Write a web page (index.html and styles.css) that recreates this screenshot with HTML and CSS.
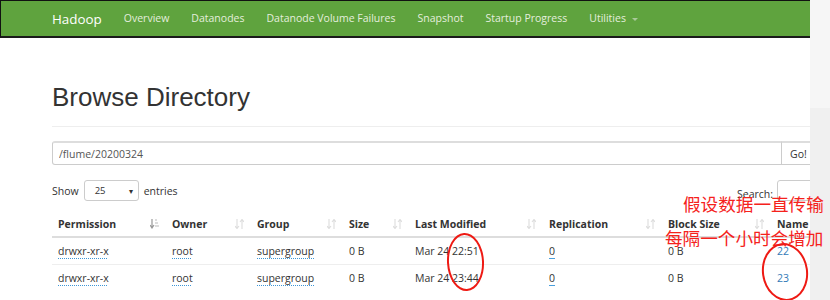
FILE: index.html
```html
<!DOCTYPE html>
<html lang="en">
<head>
    <meta charset="UTF-8">
    <title>Browsing HDFS</title>
    <link rel="stylesheet" href="styles.css">
</head>
<body>
    <div class="window">
        <div class="page">
            <nav class="navbar">
                <span class="brand">Hadoop</span>
                <a class="nav-link" href="#">Overview</a>
                <a class="nav-link" href="#">Datanodes</a>
                <a class="nav-link" href="#">Datanode Volume Failures</a>
                <a class="nav-link" href="#">Snapshot</a>
                <a class="nav-link" href="#">Startup Progress</a>
                <a class="nav-link" href="#">Utilities <span class="caret"></span></a>
            </nav>

            <div class="container">
                <h1 class="page-header">Browse Directory</h1>

                <form class="dir-form">
                    <input type="text" class="dir-input" value="/flume/20200324">
                    <button type="button" class="go-btn">Go!</button>
                </form>

                <div class="table-controls">
                    <label class="length">Show
                        <span class="select">25 <span class="select-caret">&#9662;</span></span>
                        entries</label>
                    <label class="search">Search: <span class="search-input"></span></label>
                </div>

                <table class="listing">
                    <colgroup>
                        <col style="width: 114px">
                        <col style="width: 85px">
                        <col style="width: 92px">
                        <col style="width: 66px">
                        <col style="width: 134px">
                        <col style="width: 119px">
                        <col style="width: 109px">
                        <col style="width: 51px">
                    </colgroup>
                    <thead>
                        <tr>
                            <th><div class="th">Permission <svg class="sort active" width="9" height="10" viewBox="0 0 9 10"><path d="M2 0v8M0 6l2 3 2-3" fill="none" stroke="#999" stroke-width="1.2"/><path d="M5 1h2M5 4h3M5 7h4" stroke="#bbb" stroke-width="1.2"/></svg></div></th>
                            <th><div class="th">Owner <svg class="sort" width="9" height="10" viewBox="0 0 9 10"><path d="M2 0v9M0 7l2 2.5 2-2.5M7 10V1M5 3l2-2.5 2 2.5" fill="none" stroke="#ddd" stroke-width="1.1"/></svg></div></th>
                            <th><div class="th">Group <svg class="sort" width="9" height="10" viewBox="0 0 9 10"><path d="M2 0v9M0 7l2 2.5 2-2.5M7 10V1M5 3l2-2.5 2 2.5" fill="none" stroke="#ddd" stroke-width="1.1"/></svg></div></th>
                            <th><div class="th">Size <svg class="sort" width="9" height="10" viewBox="0 0 9 10"><path d="M2 0v9M0 7l2 2.5 2-2.5M7 10V1M5 3l2-2.5 2 2.5" fill="none" stroke="#ddd" stroke-width="1.1"/></svg></div></th>
                            <th><div class="th">Last Modified <svg class="sort" width="9" height="10" viewBox="0 0 9 10"><path d="M2 0v9M0 7l2 2.5 2-2.5M7 10V1M5 3l2-2.5 2 2.5" fill="none" stroke="#ddd" stroke-width="1.1"/></svg></div></th>
                            <th><div class="th">Replication <svg class="sort" width="9" height="10" viewBox="0 0 9 10"><path d="M2 0v9M0 7l2 2.5 2-2.5M7 10V1M5 3l2-2.5 2 2.5" fill="none" stroke="#ddd" stroke-width="1.1"/></svg></div></th>
                            <th><div class="th">Block Size <svg class="sort" width="9" height="10" viewBox="0 0 9 10"><path d="M2 0v9M0 7l2 2.5 2-2.5M7 10V1M5 3l2-2.5 2 2.5" fill="none" stroke="#ddd" stroke-width="1.1"/></svg></div></th>
                            <th><div class="th">Name</div></th>
                        </tr>
                    </thead>
                    <tbody>
                        <tr>
                            <td><span class="explorer">drwxr-xr-x</span></td>
                            <td><span class="explorer">root</span></td>
                            <td><span class="explorer">supergroup</span></td>
                            <td>0 B</td>
                            <td>Mar 24 22:51</td>
                            <td><span class="repl">0</span></td>
                            <td>0 B</td>
                            <td><a class="name-link" href="#">22</a></td>
                        </tr>
                        <tr>
                            <td><span class="explorer">drwxr-xr-x</span></td>
                            <td><span class="explorer">root</span></td>
                            <td><span class="explorer">supergroup</span></td>
                            <td>0 B</td>
                            <td>Mar 24 23:44</td>
                            <td><span class="repl">0</span></td>
                            <td>0 B</td>
                            <td><a class="name-link" href="#">23</a></td>
                        </tr>
                    </tbody>
                </table>
            </div>
        </div>
        <div class="side">
            <div class="side-top"></div>
        </div>

        <!-- red hand-drawn annotations over the screenshot -->
        <div class="note note-top">假设数据一直传输</div>
        <div class="note note-bottom">每隔一个小时会增加</div>
        <div class="ring ring-time"></div>
        <div class="ring ring-name"></div>
    </div>
</body>
</html>
```

FILE: styles.css
```css
html, body {
    margin: 0;
    padding: 0;
    height: 100%;
    overflow: hidden;
}

body {
    font-family: "Open Sans", "Noto Sans", sans-serif;
    font-size: 10.5px;
    color: #333;
    background-color: #fff;
}

.window {
    position: relative;
    display: flex;
    height: 300px;
}

.page {
    width: 810px;
    flex: 0 0 810px;
    overflow: hidden;
}

.side {
    flex: 1;
    background-color: #f0f0f0;
}

.side-top {
    height: 108px;
    background-color: #f6f6f6;
}

/* navbar */
.navbar {
    display: flex;
    align-items: center;
    height: 35px;
    padding-left: 40px;
    background-color: #5fa33e;
    border-top: 1px solid #111;
    border-left: 1px solid #111;
    border-bottom: 2px solid #1a1a1a;
}

.brand {
    color: #fff;
    font-size: 13.4px;
    padding: 0 11px;
    line-height: 35px;
    margin-top: 1px;
}

.nav-link {
    color: #e4eedd;
    text-decoration: none;
    padding: 0 11px;
    line-height: 35px;
}

.caret {
    display: inline-block;
    width: 0;
    height: 0;
    margin-left: 3px;
    vertical-align: middle;
    border-top: 3px solid #a9c99a;
    border-left: 3px solid transparent;
    border-right: 3px solid transparent;
}

/* content */
.container {
    padding-left: 52px;
    width: 770px;
}

.page-header {
    font-family: "Liberation Sans", Arial, sans-serif;
    font-size: 26px;
    font-weight: normal;
    color: #333;
    margin: 0;
    padding: 45px 0 15px;
    border-bottom: 1px solid #eee;
    line-height: 28px;
}

.dir-form {
    display: flex;
    margin-top: 14px;
    height: 24px;
}

.dir-input {
    flex: 1;
    box-sizing: border-box;
    height: 24px;
    margin: 0;
    padding: 0 6px;
    font-family: inherit;
    font-size: 10.5px;
    color: #555;
    border: 1px solid #ccc;
    border-top: 2px solid #ddd;
    border-radius: 3px 0 0 3px;
    outline: none;
}

.go-btn {
    width: 41px;
    height: 24px;
    margin: 0 0 0 -1px;
    padding: 0 0 0 8px;
    text-align: left;
    font-family: inherit;
    font-size: 10.5px;
    color: #333;
    background-color: #fff;
    border: 1px solid #ccc;
    border-top: 2px solid #ddd;
}

.table-controls {
    display: flex;
    justify-content: space-between;
    align-items: center;
    margin-top: 15px;
    height: 21px;
}

.length {
    display: flex;
    align-items: center;
    gap: 5px;
}

.select {
    display: inline-flex;
    align-items: center;
    justify-content: space-between;
    box-sizing: border-box;
    width: 55px;
    height: 21px;
    padding: 0 5px 0 10px;
    font-size: 9.5px;
    border: 1px solid #ccc;
    border-radius: 3px;
}

.select-caret {
    font-size: 8px;
    color: #333;
}

.search {
    display: flex;
    align-items: center;
    gap: 4px;
    padding-top: 7px;
}

.search-input {
    display: inline-block;
    box-sizing: border-box;
    width: 45px;
    height: 21px;
    margin-top: -7px;
    border: 1px solid #ccc;
    border-radius: 3px;
}

/* table */
.listing {
    table-layout: fixed;
    width: 770px;
    border-collapse: collapse;
    margin-top: 11px;
}

.listing th {
    padding: 0;
    text-align: left;
    font-weight: bold;
    border-bottom: 2px solid #ddd;
    height: 24px;
}

.th {
    display: flex;
    justify-content: space-between;
    align-items: center;
    padding: 0 7px 0 6px;
    white-space: nowrap;
}

.sort {
    flex: 0 0 auto;
}

.listing td {
    padding: 0 6px;
    height: 26px;
    white-space: nowrap;
    border-bottom: 1px solid #eee;
}

.listing tbody tr:last-child td {
    border-bottom: none;
}

.explorer {
    text-decoration: underline dotted #3d96d6;
    text-underline-offset: 3px;
    text-decoration-thickness: 1px;
}

.repl {
    text-decoration: underline solid #4a9fdc;
    text-underline-offset: 3px;
    text-decoration-thickness: 1px;
}

.name-link {
    color: #337ab7;
    text-decoration: none;
}

/* annotations */
.note {
    position: absolute;
    font-family: "Noto Sans CJK SC", sans-serif;
    font-size: 17.6px;
    line-height: 20px;
    color: #f5221c;
    white-space: nowrap;
}

.note-top {
    left: 683px;
    top: 194px;
}

.note-bottom {
    left: 665px;
    top: 228px;
}

.ring {
    position: absolute;
    border: 2px solid #ee1a14;
    border-radius: 50%;
}

.ring-time {
    left: 447px;
    top: 233px;
    width: 33px;
    height: 54px;
    transform: rotate(-3deg);
}

.ring-name {
    left: 762px;
    top: 243px;
    width: 42px;
    height: 54px;
    transform: rotate(-8deg);
}
```
